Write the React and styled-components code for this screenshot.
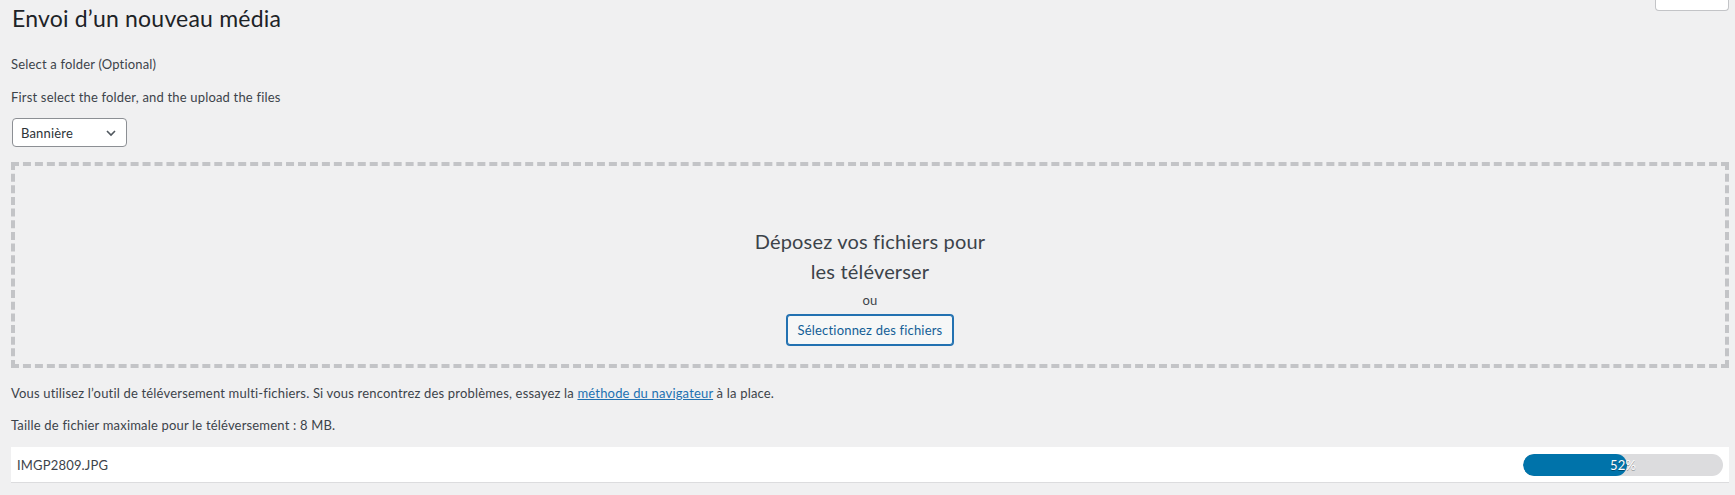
import React from "react"
import styled, { createGlobalStyle } from "styled-components"

const GlobalStyle = createGlobalStyle`
  html, body {
    margin: 0;
    padding: 0;
    background: #f0f0f1;
    color: #3c434a;
    font-family: Lato, "Noto Sans", sans-serif;
    font-size: 13px;
    letter-spacing: 0.18px;
  }
`

const Wrap = styled.div`
  padding: 0 6px 0 11px;
  overflow: hidden;
`

const TopRow = styled.div`
  display: flex;
  justify-content: space-between;
  align-items: flex-start;
`

const Title = styled.h1`
  margin: 0;
  padding: 3px 0 0 1px;
  font-size: 23px;
  font-weight: 400;
  line-height: 30px;
  letter-spacing: 0.2px;
  color: #1d2327;
`

const HelpTab = styled.div`
  margin-top: -17px;
  width: 74px;
  height: 28px;
  background: #fff;
  border: 1px solid #c3c4c7;
  border-top: none;
  border-radius: 0 0 4px 4px;
  display: flex;
  align-items: flex-end;
  padding: 0 0 6px 17px;
  font-size: 13px;
  line-height: 18px;
  color: #646970;
  box-sizing: border-box;
`

const Note = styled.p`
  margin: ${p => p.$top || 0}px 0 0;
  font-size: 13px;
  line-height: 18px;
`

const SelectBox = styled.div`
  margin-top: ${p => p.$top}px;
  margin-left: 1px;
  width: 115px;
  height: 29px;
  box-sizing: border-box;
  background: #fff;
  border: 1px solid #8c8f94;
  border-radius: 4px;
  display: flex;
  align-items: center;
  justify-content: space-between;
  padding: 0 9px 0 8px;
  font-size: 13px;
  color: #2c3338;
`

const DropArea = styled.div`
  margin-top: 15px;
  height: 206px;
  box-sizing: border-box;
  border: 4px dashed #c3c4c7;
  display: flex;
  flex-direction: column;
  align-items: center;
  padding-top: 60px;
`

const DropInfo = styled.p`
  margin: 0;
  width: 250px;
  text-align: center;
  font-size: 20px;
  line-height: 30px;
  color: #3c434a;
`

const Or = styled.p`
  margin: 4px 0 0;
  font-size: 13px;
  line-height: 20px;
`

const PickButton = styled.button`
  margin-top: 5px;
  height: 30px;
  padding: 0 10px;
  font-family: inherit;
  font-size: 13px;
  letter-spacing: 0.18px;
  color: #135e96;
  background: #f6f7f7;
  border: 1px solid #2271b1;
  box-shadow: 0 0 0 1px #2271b1;
  border-radius: 3px;
  cursor: pointer;
`

const Link = styled.a`
  color: #2271b1;
  text-decoration: underline;
`

const FileRow = styled.div`
  margin-top: 13px;
  height: 36px;
  box-sizing: border-box;
  background: #fff;
  border-bottom: 1px solid #dcdcde;
  display: flex;
  align-items: center;
  justify-content: space-between;
  padding: 0 6px 0 6px;
`

const FileName = styled.span`
  font-size: 13px;
  color: #3c434a;
`

const Progress = styled.div`
  position: relative;
  width: 200px;
  height: 22px;
  border-radius: 11px;
  background: #dcdcde;
  overflow: hidden;
`

const Fill = styled.div`
  height: 100%;
  background: #0073aa;
  border-radius: 11px;
`

const Percent = styled.span`
  position: absolute;
  inset: 0;
  display: flex;
  align-items: center;
  justify-content: center;
  color: #fff;
  font-size: 13px;
  text-shadow: 0 1px 0 rgba(0, 0, 0, 0.35);
`

const Chevron = () => (
  <svg width="12" height="12" viewBox="0 0 12 12" fill="none">
    <path d="M2 4l4 4 4-4" stroke="#50575e" strokeWidth="1.6" />
  </svg>
)

const App = () => {
  const percent = 52

  return (
    <>
      <GlobalStyle />
      <Wrap>
        <TopRow>
          <Title>Envoi d’un nouveau média</Title>
          <HelpTab>Aide</HelpTab>
        </TopRow>
        <Note $top={22}>Select a folder (Optional)</Note>
        <Note $top={15}>First select the folder, and the upload the files</Note>
        <SelectBox $top={12}>
          <span>Bannière</span>
          <Chevron />
        </SelectBox>
        <DropArea>
          <DropInfo>Déposez vos fichiers pour les téléverser</DropInfo>
          <Or>ou</Or>
          <PickButton>Sélectionnez des fichiers</PickButton>
        </DropArea>
        <Note $top={16}>
          Vous utilisez l’outil de téléversement multi-fichiers. Si vous
          rencontrez des problèmes, essayez la{" "}
          <Link href="#">méthode du navigateur</Link> à la place.
        </Note>
        <Note $top={14}>Taille de fichier maximale pour le téléversement : 8 MB.</Note>
        <FileRow>
          <FileName>IMGP2809.JPG</FileName>
          <Progress>
            <Fill style={{ width: `${percent}%` }} />
            <Percent>{percent}%</Percent>
          </Progress>
        </FileRow>
      </Wrap>
    </>
  )
}

export default App
